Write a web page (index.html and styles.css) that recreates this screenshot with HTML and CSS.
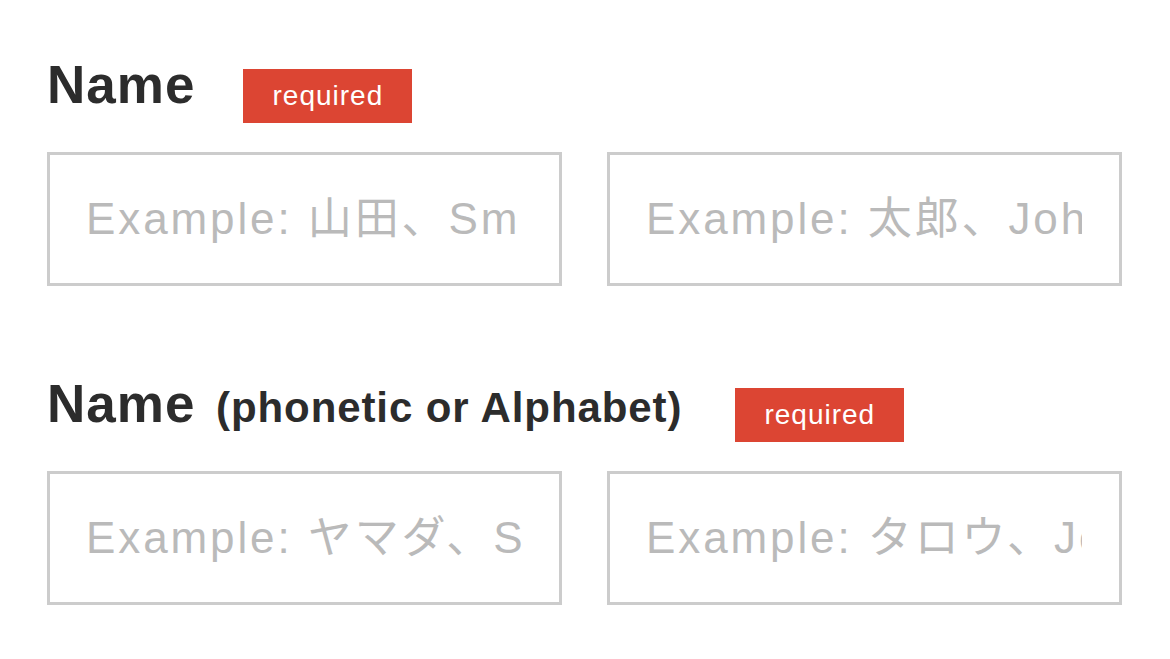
FILE: index.html
```html
<!DOCTYPE html>
<html lang="en">
<head>
<meta charset="utf-8">
<title>Name form</title>
<link rel="stylesheet" href="styles.css">
</head>
<body>
<form class="form">
  <section class="field">
    <div class="field-head">
      <h2 class="label">Name</h2>
      <span class="badge">required</span>
    </div>
    <div class="inputs">
      <input class="text-input" type="text" placeholder="Example: 山田、Smith">
      <input class="text-input" type="text" placeholder="Example: 太郎、John">
    </div>
  </section>
  <section class="field field-second">
    <div class="field-head">
      <h2 class="label">Name <span class="label-sub">(phonetic or Alphabet)</span></h2>
      <span class="badge badge-wide-gap">required</span>
    </div>
    <div class="inputs">
      <input class="text-input" type="text" placeholder="Example: ヤマダ、Smith">
      <input class="text-input" type="text" placeholder="Example: タロウ、John">
    </div>
  </section>
</form>
</body>
</html>
```

FILE: styles.css
```css
html, body {
  margin: 0;
  padding: 0;
  background: #ffffff;
}

body {
  font-family: "Liberation Sans", "Noto Sans CJK JP", sans-serif;
  color: #2c2c2c;
}

.form {
  padding: 58px 0 0 47px;
}

.field-second {
  margin-top: 91px;
}

.field-head {
  display: flex;
  align-items: flex-start;
  gap: 48px;
}

.label {
  margin: 0;
  font-size: 53px;
  line-height: 1;
  font-weight: 700;
  letter-spacing: 1px;
  color: #2c2c2c;
  white-space: nowrap;
}

.label-sub {
  margin-left: 5px;
  font-size: 42px;
  letter-spacing: 0.9px;
}

.badge {
  margin-top: 11px;
  width: 169px;
  height: 54px;
  line-height: 54px;
  text-align: center;
  background: #dc4533;
  color: #ffffff;
  font-size: 28px;
  letter-spacing: 1px;
  font-weight: 400;
}

.badge-wide-gap {
  margin-left: 5px;
}

.inputs {
  display: flex;
  gap: 45px;
  margin-top: 29px;
}

.text-input {
  box-sizing: border-box;
  width: 515px;
  height: 134px;
  margin: 0;
  padding: 0 37px 0 36px;
  border: 3px solid #cccccc;
  border-radius: 0;
  background: #ffffff;
  outline: none;
  font-family: "Liberation Sans", "Noto Sans CJK JP", sans-serif;
  font-size: 44px;
  letter-spacing: 2.9px;
  color: #333333;
}

.text-input::placeholder {
  color: #bababa;
  opacity: 1;
}
```
